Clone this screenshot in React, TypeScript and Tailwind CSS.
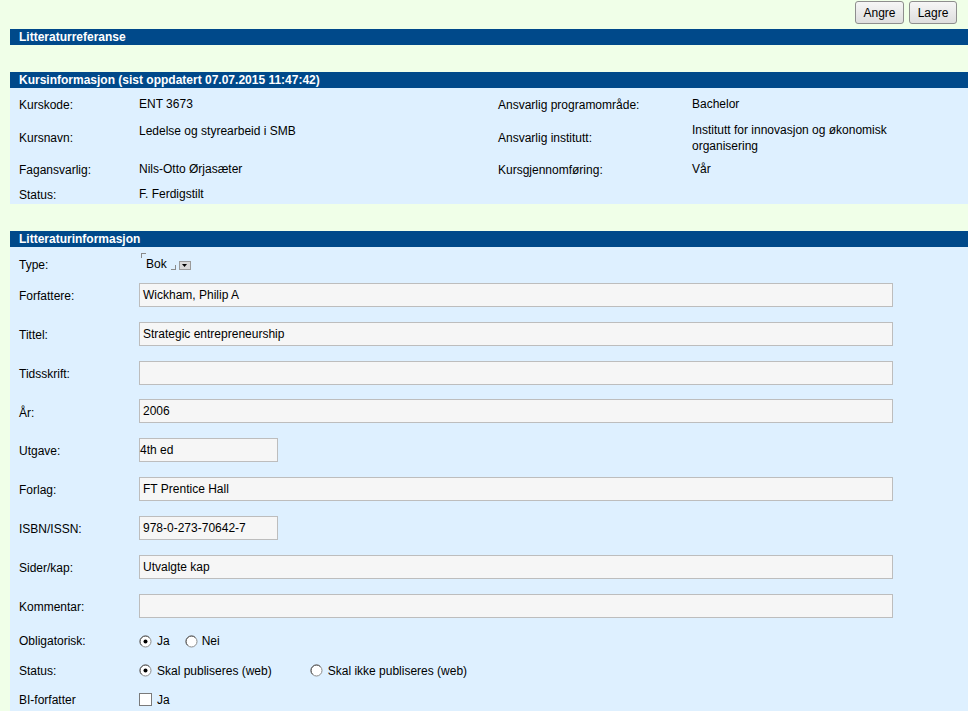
import React from "react";

const font = { fontFamily: '"Liberation Sans", Arial, sans-serif' };

function Header({ title }: { title: string }) {
  return (
    <div className="h-[16px] bg-[#00498a] pl-[9px] text-[12px] font-bold leading-[16px] text-white">
      {title}
    </div>
  );
}

function Radio({ checked }: { checked?: boolean }) {
  return (
    <svg width="13" height="13" viewBox="0 0 13 13" className="shrink-0">
      <circle cx="6.5" cy="6.5" r="5.5" fill="#ffffff" stroke="#8a8a8a" strokeWidth="1" />
      <path d="M2.6 10.4 A5.5 5.5 0 0 1 10.4 2.6" fill="none" stroke="#5a5a5a" strokeWidth="1" />
      {checked && <circle cx="6.5" cy="6.5" r="2" fill="#000000" />}
    </svg>
  );
}

function Checkbox() {
  return <span className="inline-block h-[13px] w-[13px] shrink-0 border border-[#7a7a7a] bg-white" />;
}

const courseRows = [
  { h: "h-[32px]", l1: "Kurskode:", v1: "ENT 3673", l2: "Ansvarlig programområde:", v2: ["Bachelor"] },
  {
    h: "h-[34px]",
    l1: "Kursnavn:",
    v1: "Ledelse og styrearbeid i SMB",
    l2: "Ansvarlig institutt:",
    v2: ["Institutt for innovasjon og økonomisk", "organisering"],
    top: true,
  },
  { h: "h-[30px]", l1: "Fagansvarlig:", v1: "Nils-Otto Ørjasæter", l2: "Kursgjennomføring:", v2: ["Vår"] },
  { h: "h-[20px]", l1: "Status:", v1: "F. Ferdigstilt", l2: "", v2: [] as string[] },
];

const fields = [
  { label: "Forfattere:", value: "Wickham, Philip A" },
  { label: "Tittel:", value: "Strategic entrepreneurship" },
  { label: "Tidsskrift:", value: "" },
  { label: "År:", value: "2006", row: "h-[38px]" },
  { label: "Utgave:", value: "4th ed", short: true, tight: true },
  { label: "Forlag:", value: "FT Prentice Hall" },
  { label: "ISBN/ISSN:", value: "978-0-273-70642-7", short: true },
  { label: "Sider/kap:", value: "Utvalgte kap" },
  { label: "Kommentar:", value: "" },
];

export default function App() {
  return (
    <div className="min-h-[711px] overflow-hidden bg-[#f0ffe8] text-[12px] text-black" style={font}>
      {/* Toolbar */}
      <div className="flex justify-end gap-[5px] pr-[11px] pt-[1px]">
        <button className="h-[23px] w-[49px] rounded-[3px] border border-[#8e8e8e] bg-gradient-to-b from-[#f6f6f6] to-[#dedede] text-[12px] text-black">
          Angre
        </button>
        <button className="h-[23px] w-[48px] rounded-[3px] border border-[#8e8e8e] bg-gradient-to-b from-[#f6f6f6] to-[#dedede] text-[12px] text-black">
          Lagre
        </button>
      </div>

      <div className="ml-[10px] mt-[5px] w-[958px]">
        <Header title="Litteraturreferanse" />

        <div className="mt-[27px]">
          <Header title="Kursinformasjon (sist oppdatert 07.07.2015 11:47:42)" />
          <div className="bg-[#def0ff] pl-[9px]">
            {courseRows.map((r) => (
              <div key={r.l1} className={`flex ${r.h}`}>
                <div className="w-[120px] self-center pt-[2px]">{r.l1}</div>
                <div className={`w-[359px] ${r.top ? "self-start pt-[3px] leading-[16px]" : "self-center"}`}>
                  {r.v1}
                </div>
                <div className="w-[194px] self-center pt-[2px]">{r.l2}</div>
                <div className={`w-[240px] leading-[16px] ${r.top ? "self-start pt-[2px]" : "self-center"}`}>
                  {r.v2.map((t) => (
                    <div key={t}>{t}</div>
                  ))}
                </div>
              </div>
            ))}
          </div>
        </div>

        <div className="mt-[27px]">
          <Header title="Litteraturinformasjon" />
          <div className="bg-[#def0ff] pl-[9px]">
            {/* Type */}
            <div className="flex h-[28px] items-center pt-[8px]">
              <div className="w-[120px]">Type:</div>
              <div className="relative flex items-center">
                <span className="absolute -top-[5px] left-[2px] h-[5px] w-[5px] border-l border-t border-[#8a8a8a]" />
                <span className="ml-[7px] -mt-[3px]">Bok</span>
                <span className="ml-[4px] mt-[4px] h-[5px] w-[5px] border-b border-r border-[#8a8a8a]" />
                <span className="ml-[3px] mt-[1px] flex h-[9px] w-[12px] items-center justify-center border border-[#9a9a9a] bg-[#d8d8d8]">
                  <svg width="5" height="3" viewBox="0 0 5 3">
                    <path d="M0 0h5L2.5 3z" fill="#000" />
                  </svg>
                </span>
              </div>
            </div>

            {fields.map((f) => (
              <div key={f.label} className={`flex items-center ${f.row ?? "h-[39px]"}`}>
                <div className="w-[120px] pt-[3px]">{f.label}</div>
                <div
                  className={`flex h-[24px] items-center border border-[#bdbdbd] bg-[#f6f6f6] ${
                    f.short ? "w-[139px]" : "w-[754px]"
                  } ${f.tight ? "pl-[0px]" : "pl-[3px]"}`}
                >
                  {f.value}
                </div>
              </div>
            ))}

            <div className="flex h-[30px] items-center pt-[2px]">
              <div className="w-[120px]">Obligatorisk:</div>
              <div className="flex items-center">
                <Radio checked />
                <span className="ml-[5px]">Ja</span>
                <span className="ml-[15px]">
                  <Radio />
                </span>
                <span className="ml-[4px]">Nei</span>
              </div>
            </div>
            <div className="flex h-[29px] items-center pt-[2px]">
              <div className="w-[120px]">Status:</div>
              <div className="flex items-center">
                <Radio checked />
                <span className="ml-[5px]">Skal publiseres (web)</span>
                <span className="ml-[38px]">
                  <Radio />
                </span>
                <span className="ml-[5px]">Skal ikke publiseres (web)</span>
              </div>
            </div>
            <div className="flex h-[29px] items-center pt-[2px]">
              <div className="w-[120px]">BI-forfatter</div>
              <div className="flex items-center">
                <Checkbox />
                <span className="ml-[5px]">Ja</span>
              </div>
            </div>
          </div>
        </div>
      </div>
    </div>
  );
}
